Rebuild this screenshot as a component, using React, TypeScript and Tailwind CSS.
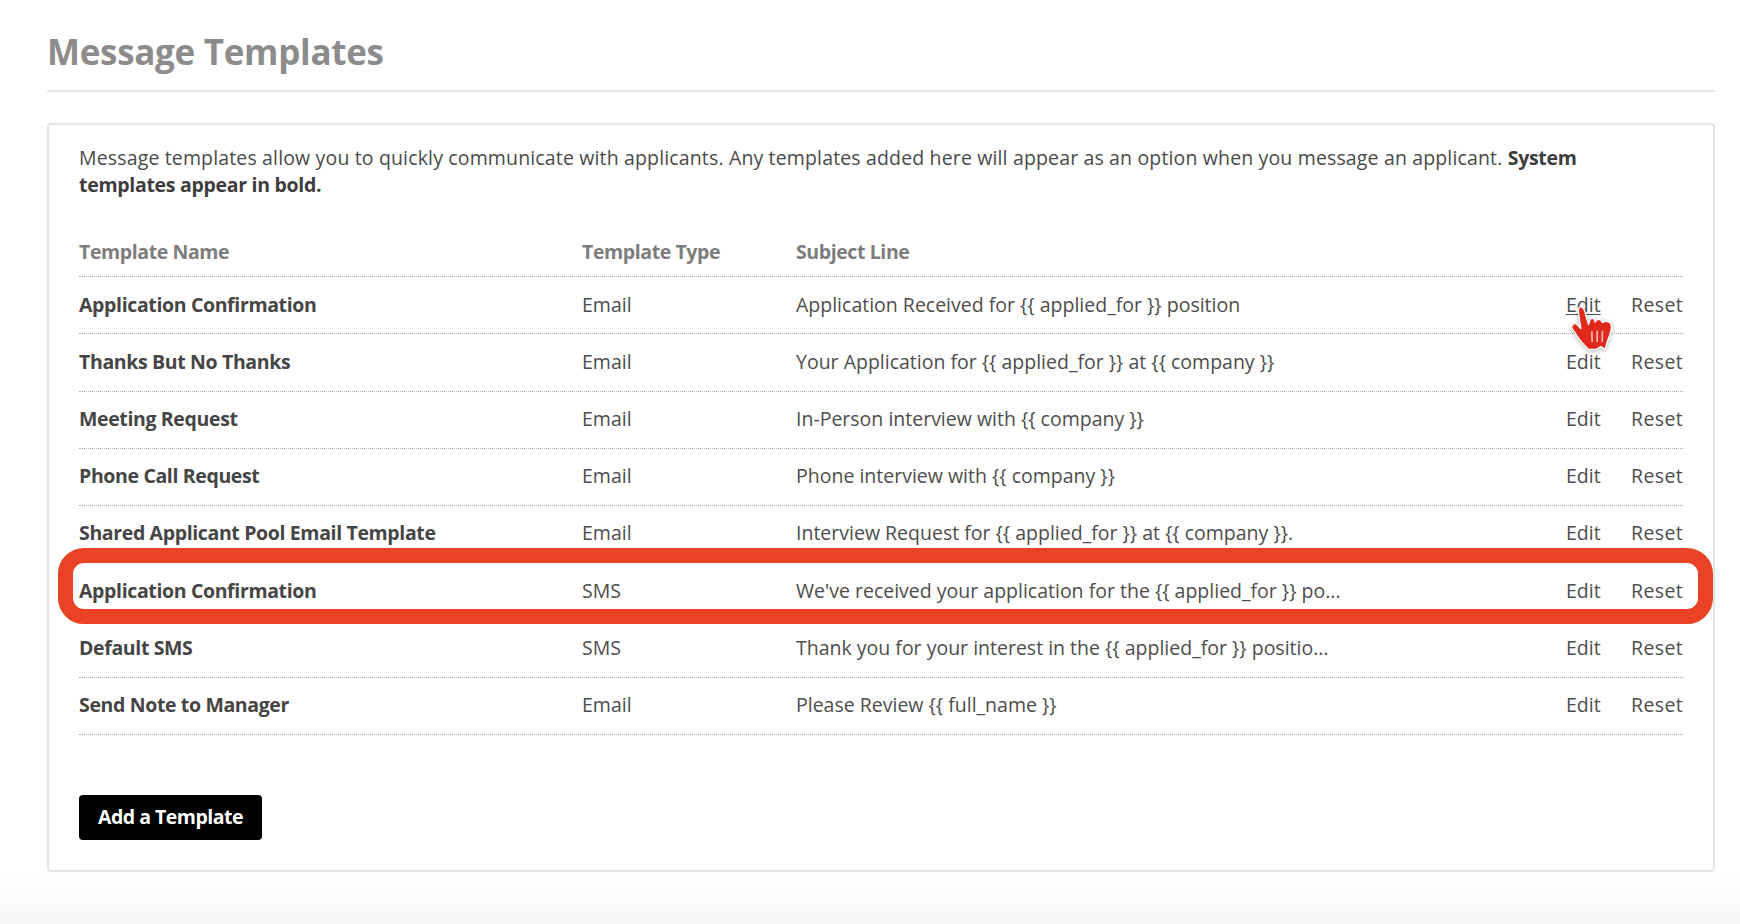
import React from "react";

const rows: [string, string, string][] = [
  ["Application Confirmation", "Email", "Application Received for {{ applied_for }} position"],
  ["Thanks But No Thanks", "Email", "Your Application for {{ applied_for }} at {{ company }}"],
  ["Meeting Request", "Email", "In-Person interview with {{ company }}"],
  ["Phone Call Request", "Email", "Phone interview with {{ company }}"],
  ["Shared Applicant Pool Email Template", "Email", "Interview Request for {{ applied_for }} at {{ company }}."],
  ["Application Confirmation", "SMS", "We've received your application for the {{ applied_for }} po..."],
  ["Default SMS", "SMS", "Thank you for your interest in the {{ applied_for }} positio..."],
  ["Send Note to Manager", "Email", "Please Review {{ full_name }}"],
];

function Hand() {
  return (
    <svg
      viewBox="265 170 140 150"
      className="absolute left-[2px] top-[14px] w-[47px] h-[50px] drop-shadow-[0_1px_2px_rgba(0,0,0,0.3)]"
    >
      <path
        d="M301 178 C310 178 316 192 318 205 L326 232 L331 216 C336 210 343 212 346 224 C352 214 362 212 368 226 C376 220 386 222 392 228 C396 234 394 250 390 262 L382 284 L376 306 L362 298 L350 306 L326 306 C316 296 304 284 296 272 L276 242 C274 234 282 226 290 230 L303 244 L296 196 C295 186 296 180 301 178 Z"
        fill="#e0281c"
        stroke="#ffffff"
        strokeWidth="4"
        strokeLinejoin="round"
      />
      <path d="M336 252 L337 284 M352 250 L352 284 M368 250 L367 284" stroke="#f3b9b0" strokeWidth="5" fill="none" />
    </svg>
  );
}

export default function App() {
  return (
    <div className="relative h-[924px] overflow-hidden bg-white font-['Open_Sans',sans-serif] text-[19.5px] text-[#4d4d4d]">
      <div className="pl-[47px] pr-[25px]">
        <div className="h-[92px] pt-[29px] border-b-2 border-[#e4e4e4]">
          <h1 className="text-[35px] leading-[46px] font-bold tracking-[-0.3px] text-[#8c8c8c]">Message Templates</h1>
        </div>
        <div className="mt-[31px] rounded border-2 border-[#e4e4e4] pl-[30px] pr-[30px] pt-[20px] pb-[30px]">
          <p className="leading-[26.6px] tracking-[0.15px] text-[#4a4a4a]">
            Message templates allow you to quickly communicate with applicants. Any templates added here will appear as an option when you message an applicant.{" "}
            <b className="font-bold tracking-[-0.3px] text-[#3d3d3d]">System<br />templates appear in bold.</b>
          </p>
          <div className="mt-[31px]">
            <div className="flex h-[48px] items-center pb-[2px] border-b border-dotted border-[#a8a8a8] font-bold tracking-[-0.4px] text-[#7d7d7d]">
              <div className="w-[503px]">Template Name</div>
              <div className="w-[214px]">Template Type</div>
              <div className="flex-1">Subject Line</div>
            </div>
            {rows.map(([name, type, subject], i) => (
              <div key={i} className="flex h-[57.2px] items-center pb-[2px] border-b border-dotted border-[#a8a8a8]">
                <div className="w-[503px] font-bold tracking-[-0.36px] text-[#454545]">{name}</div>
                <div className="w-[214px]">{type}</div>
                <div className="flex-1">{subject}</div>
                <div className="relative w-[65px]">
                  <span className={i === 0 ? "underline underline-offset-2" : ""}>Edit</span>
                  {i === 0 && <Hand />}
                </div>
                <div className="w-[52px] text-right tracking-[0.4px]">Reset</div>
              </div>
            ))}
          </div>
          <button className="mt-[60px] flex h-[45px] w-[183px] items-center justify-center rounded bg-black pb-[2px] font-bold tracking-[-0.5px] text-white">
            Add a Template
          </button>
        </div>
      </div>
      <div className="mt-[1px] h-[52px] bg-linear-to-b from-white to-[#f6f6f6]" />
      <div className="absolute left-[58px] top-[548px] h-[76px] w-[1655px] rounded-[26px] border-[15px] border-[#e94225]" />
    </div>
  );
}
